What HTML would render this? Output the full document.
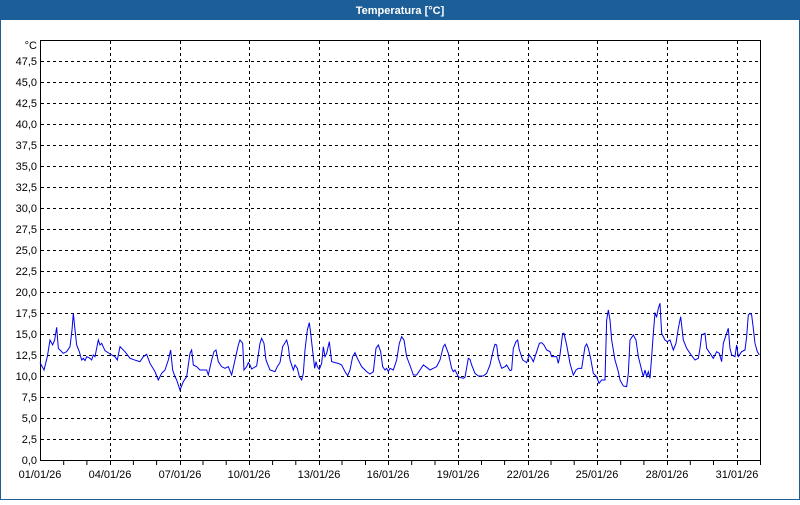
<!DOCTYPE html>
<html><head><meta charset="utf-8"><style>
body{margin:0;width:800px;height:500px;overflow:hidden;background:#fff;font-family:"Liberation Sans",sans-serif}
</style></head><body>
<svg width="800" height="500" xmlns="http://www.w3.org/2000/svg" font-family="Liberation Sans, sans-serif" font-size="11">
<rect x="0" y="0" width="800" height="500" fill="#fff"/>
<rect x="0.5" y="0.5" width="799" height="499" fill="none" stroke="#1c5e97"/>
<rect x="0" y="0" width="800" height="20" fill="#1c5e97"/>
<text x="400" y="14" fill="#fff" font-weight="bold" text-anchor="middle">Temperatura [°C]</text>
<g stroke="#000" stroke-dasharray="3,3" stroke-width="1">
<path d="M41 439.5H760M41 418.5H760M41 397.5H760M41 376.5H760M41 355.5H760M41 334.5H760M41 313.5H760M41 292.5H760M41 271.5H760M41 250.5H760M41 229.5H760M41 208.5H760M41 187.5H760M41 166.5H760M41 145.5H760M41 124.5H760M41 103.5H760M41 82.5H760M41 61.5H760"/>
<path d="M110.5 41V460M180.5 41V460M249.5 41V460M319.5 41V460M388.5 41V460M458.5 41V460M528.5 41V460M597.5 41V460M667.5 41V460M737.5 41V460"/>
</g>
<rect x="40.5" y="40.5" width="720" height="420" fill="none" stroke="#000"/>
<g stroke="#000">
<path d="M63.7 461V465M86.9 461V465M110.5 461V465M133.4 461V465M156.6 461V465M180.5 461V465M203 461V465M226.2 461V465M249.5 461V465M272.6 461V465M295.8 461V465M319.5 461V465M342 461V465M365.5 461V465M388.5 461V465M411.7 461V465M435 461V465M458.5 461V465M481.5 461V465M504.6 461V465M528.5 461V465M551 461V465M574.2 461V465M597.5 461V465M620.7 461V465M643.9 461V465M667.5 461V465M690.3 461V465M713.5 461V465M737.5 461V465M760.5 461V465"/>
</g>
<g text-anchor="end" fill="#000">
<text x="37" y="49">°C</text>
<text x="37" y="65">47,5</text><text x="37" y="86">45,0</text><text x="37" y="107">42,5</text><text x="37" y="128">40,0</text><text x="37" y="149">37,5</text><text x="37" y="170">35,0</text><text x="37" y="191">32,5</text><text x="37" y="212">30,0</text><text x="37" y="233">27,5</text><text x="37" y="254">25,0</text><text x="37" y="275">22,5</text><text x="37" y="296">20,0</text><text x="37" y="317">17,5</text><text x="37" y="338">15,0</text><text x="37" y="359">12,5</text><text x="37" y="380">10,0</text><text x="37" y="401">7,5</text><text x="37" y="422">5,0</text><text x="37" y="443">2,5</text><text x="37" y="464">0,0</text>
</g>
<g text-anchor="middle" fill="#000">
<text x="40" y="478">01/01/26</text><text x="110" y="478">04/01/26</text><text x="180" y="478">07/01/26</text><text x="249" y="478">10/01/26</text><text x="319" y="478">13/01/26</text><text x="388" y="478">16/01/26</text><text x="458" y="478">19/01/26</text><text x="528" y="478">22/01/26</text><text x="597" y="478">25/01/26</text><text x="667" y="478">28/01/26</text><text x="737" y="478">31/01/26</text>
</g>
<g fill="none" stroke="#0000ee" stroke-width="1">
<polyline vector-effect="non-scaling-stroke" transform="translate(40,290) scale(0.3333)" points="0,218 12,240 22,200 30,150 38,165 44,150 50,112 55,175 60,180 70,190 80,185 90,170 96,120 100,70 104,110 110,165 118,185 125,210 130,205 135,212 140,200 150,205 155,210 160,195 165,200 170,175 175,150 180,165 185,160 195,182 215,195 225,200 232,210 240,170 255,185 270,205 290,212 300,215 310,200 320,193 330,220 345,245 355,270 365,250 375,240 385,210 392,180 398,240 405,260 410,270 420,300 430,275 440,260 450,190 455,180 460,225 470,230 480,240 490,240 500,240 505,255 515,210 522,185 528,180 535,215 545,230 555,235 565,230 575,255 585,210 595,165 600,150 608,160 612,240 620,230 625,218 630,225 635,237 650,228 660,160 665,145 672,160 678,210 690,240 705,245 712,230 720,218"/>
<polyline vector-effect="non-scaling-stroke" transform="translate(280,290) scale(0.3333)" points="0,218 8,170 20,150 25,170 30,210 40,240 45,225 52,235 58,260 65,270 70,250 75,180 82,120 88,98 92,130 100,200 104,235 108,215 112,230 118,238 125,220 130,170 135,200 140,190 148,155 155,215 165,218 175,220 185,225 195,245 203,257 210,240 218,200 225,188 232,205 245,230 260,245 270,252 280,245 288,175 295,165 302,185 308,230 315,240 320,235 325,245 330,235 340,240 350,210 358,160 365,140 372,150 380,200 395,240 400,255 410,255 420,240 430,225 440,232 450,240 460,235 470,230 480,210 490,170 495,163 505,190 515,235 520,245 525,240 535,260 540,262 550,265 555,262 565,205 570,208 575,225 585,250 595,258 610,258 620,250 630,225 640,180 645,163 650,165 655,205 665,235 675,230 680,225 690,242 695,240 700,175 708,155 713,150 718,180 720,185"/>
<polyline vector-effect="non-scaling-stroke" transform="translate(520,290) scale(0.3333)" points="0,185 8,210 20,218 28,195 35,205 40,215 50,185 58,160 65,158 72,165 80,180 90,185 95,200 110,200 115,220 120,195 128,130 132,130 140,165 150,220 160,255 168,240 175,235 185,235 195,170 200,162 205,175 212,205 220,250 230,260 237,280 245,270 255,270 260,90 265,60 270,90 275,150 285,210 295,245 300,270 310,288 320,290 325,250 330,150 340,135 348,150 355,200 365,240 370,260 375,240 380,260 385,245 390,265 395,200 400,130 405,70 410,80 415,55 420,40 425,130 435,150 442,155 450,150 460,180 468,160 475,115 482,80 490,150 500,175 510,190 525,210 535,205 540,175 545,135 555,130 560,175 570,190 580,205 590,185 598,190 605,215 610,160 620,130 625,115 630,175 635,195 645,200 650,165 655,200 665,185 675,180 680,140 685,75 690,70 695,75 700,115 705,160 712,185 718,195"/>
</g>
</svg>
</body></html>
